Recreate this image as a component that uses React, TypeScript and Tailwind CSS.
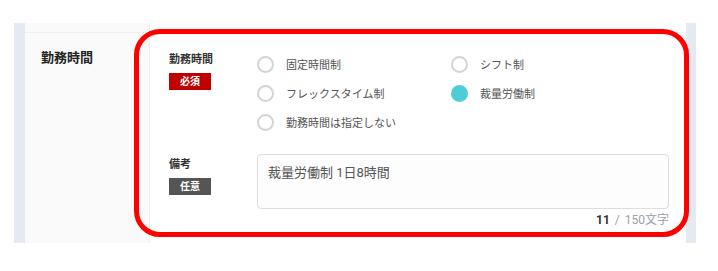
const font = { fontFamily: 'Roboto, "Noto Sans CJK JP", "Noto Sans", sans-serif' };

const options = [
  { label: "固定時間制", checked: false },
  { label: "シフト制", checked: false },
  { label: "フレックスタイム制", checked: false },
  { label: "裁量労働制", checked: true },
  { label: "勤務時間は指定しない", checked: false },
];

function Radio({ label, checked }: { label: string; checked: boolean }) {
  return (
    <div className="flex h-[29px] items-center">
      {checked ? (
        <span className="h-[17px] w-[17px] rounded-full bg-[#4ecdd6]" />
      ) : (
        <span className="h-[17px] w-[17px] rounded-full border-2 border-[#d4d4d4] bg-white" />
      )}
      <span className="ml-[12px] mt-[2px] text-[11px] leading-[17px] text-[#555]">{label}</span>
    </div>
  );
}

function App() {
  return (
    <div className="relative h-[271px] w-[718px] bg-white pt-[23px]" style={font}>
      <div className="ml-[14px] flex h-[220px] w-[682px]">
        <div className="w-[11px] bg-[#e4e9f2]" />
        <div className="flex flex-1 flex-col">
          <div className="flex h-[10px] border-b border-[#eeeeee]">
            <div className="w-[125px] border-r border-[#eeeeee] bg-[#fafafa]" />
            <div className="flex-1 bg-white" />
          </div>
          <div className="flex flex-1">
            <div className="w-[125px] border-r border-[#eeeeee] bg-[#fafafa] pl-[16px] pt-[15px]">
              <div className="text-[13px] font-bold text-[#222]">勤務時間</div>
            </div>
            <div className="flex-1 bg-white pl-[19px] pr-[17px] pt-[17px]">
              <div className="flex">
                <div className="w-[88px] pt-[3px]">
                  <div className="text-[11px] font-bold leading-[14px] text-[#333]">勤務時間</div>
                  <div className="mt-[6px] flex h-[17px] w-[42px] items-center justify-center bg-[#c00000] text-[10px] font-bold text-white">
                    必須
                  </div>
                </div>
                <div className="grid w-[400px] grid-cols-[194px_1fr]">
                  {options.map((o) => (
                    <Radio key={o.label} label={o.label} checked={o.checked} />
                  ))}
                </div>
              </div>
              <div className="mt-[17px] flex">
                <div className="w-[88px] pt-[4px]">
                  <div className="text-[11px] font-bold leading-[14px] text-[#333]">備考</div>
                  <div className="mt-[6px] flex h-[17px] w-[42px] items-center justify-center bg-[#555555] text-[10px] font-bold text-white">
                    任意
                  </div>
                </div>
                <div className="flex-1">
                  <div className="h-[55px] rounded-[4px] border border-[#dddddd] bg-[#fdfdfd] px-[10px] pt-[8px] text-[13px] text-[#555]">
                    裁量労働制 1日8時間
                  </div>
                  <div className="mt-[4px] text-right text-[12px] leading-[15px] text-[#9aa0a6]">
                    <span className="font-bold text-[#333]">11</span>
                    <span className="mx-[5px]">/</span>150文字
                  </div>
                </div>
              </div>
            </div>
          </div>
        </div>
        <div className="w-[10px] bg-[#e4e9f2]" />
      </div>
      <div className="pointer-events-none absolute left-[134px] top-[29px] h-[208px] w-[555px] rounded-[26px] border-[5px] border-[#ff0000]" />
    </div>
  );
}

export default App;
